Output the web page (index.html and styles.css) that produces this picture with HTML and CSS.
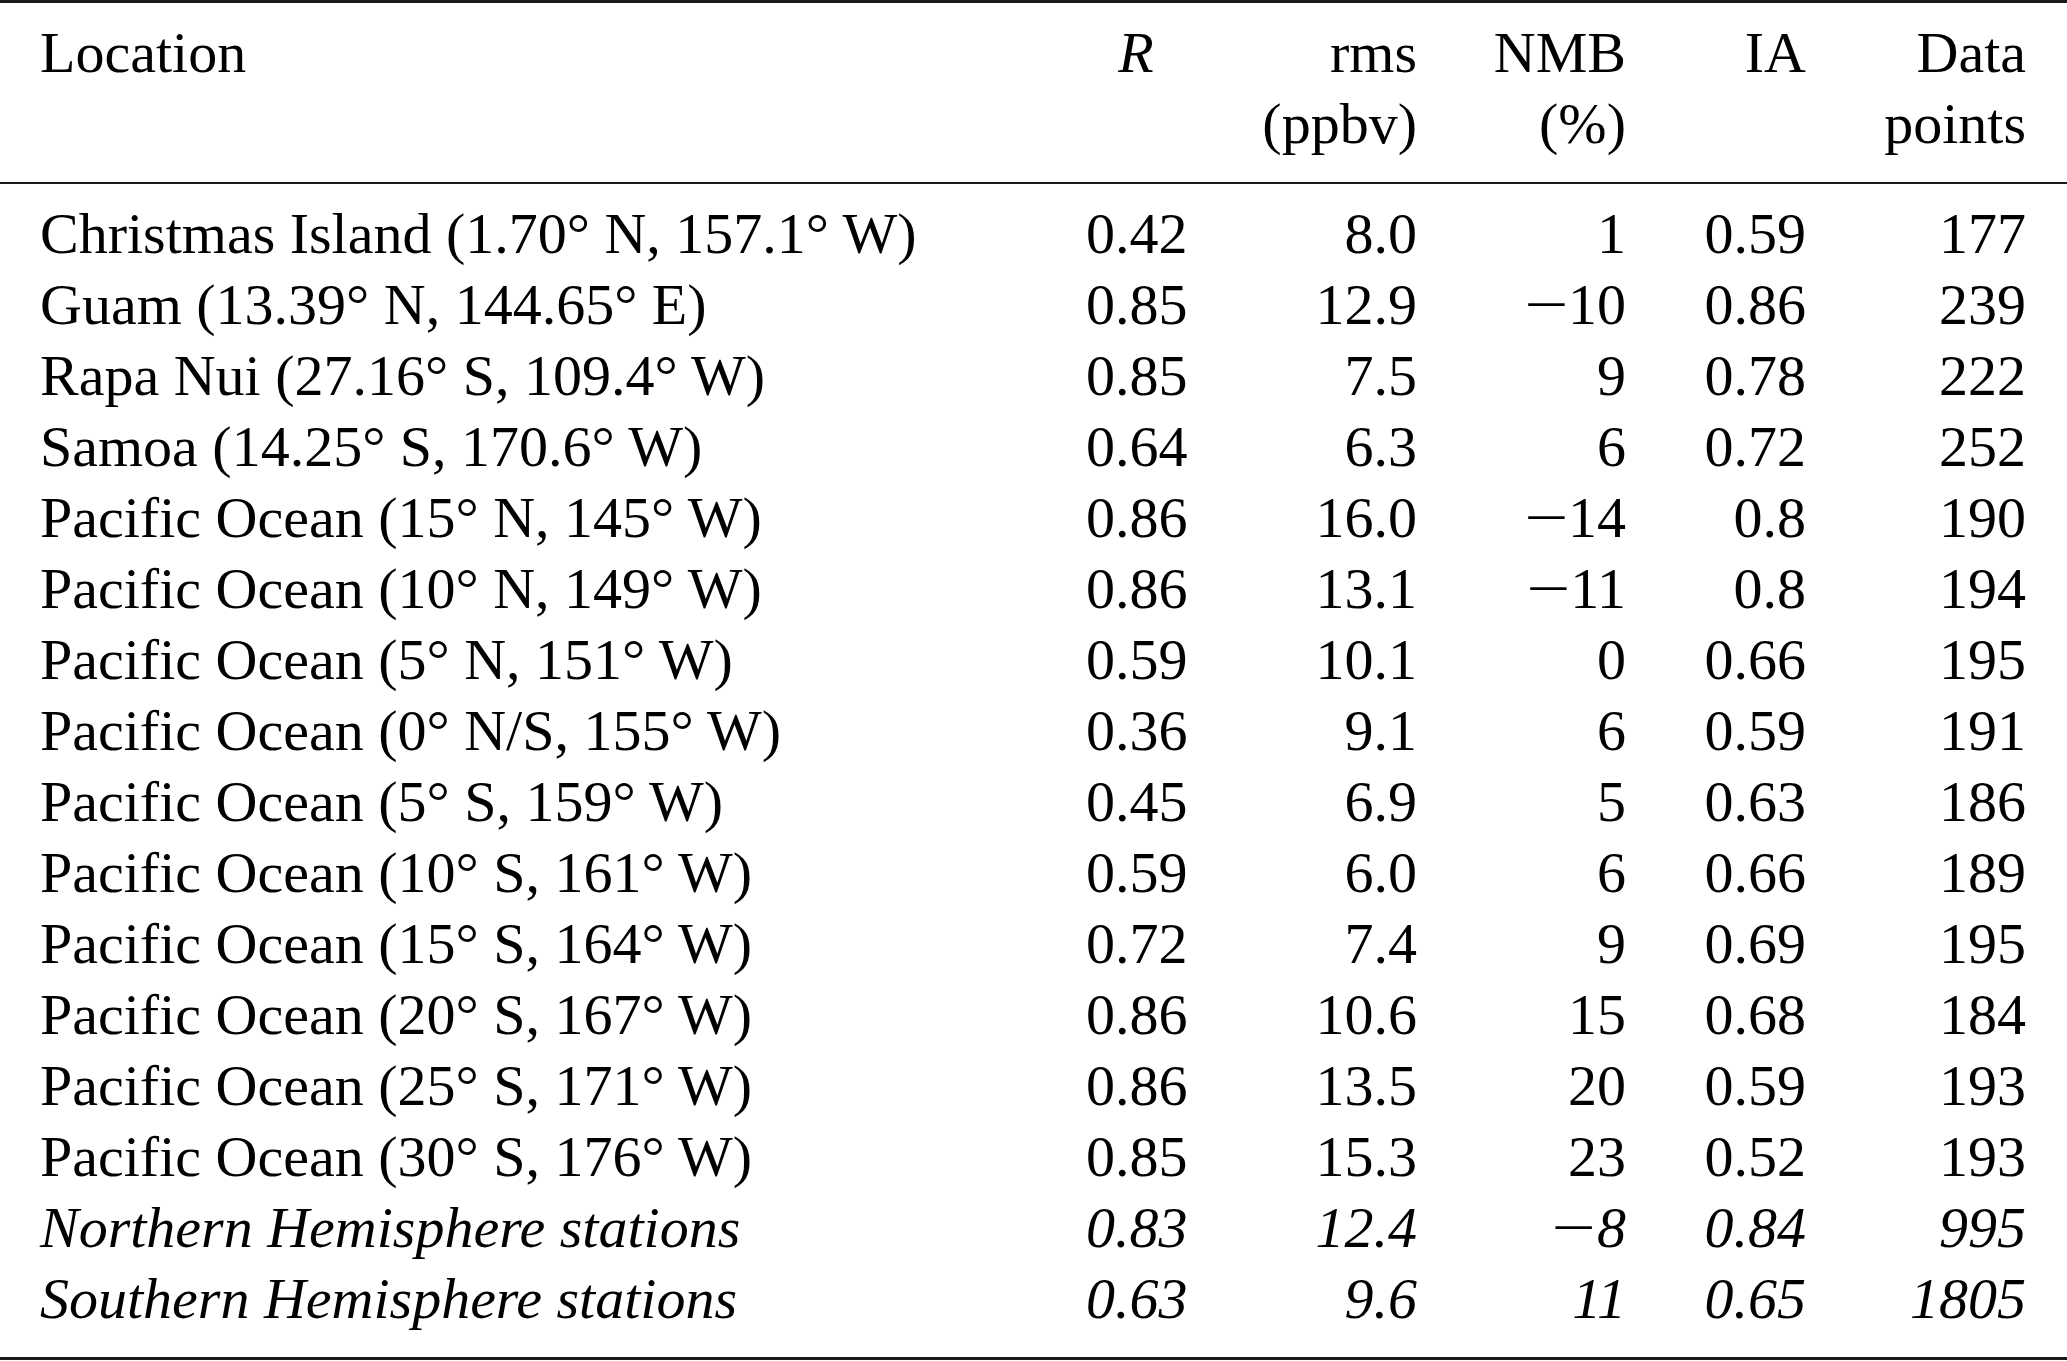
FILE: index.html
```html
<!DOCTYPE html>
<html lang="en">
<head>
<meta charset="utf-8">
<title>Ozone evaluation statistics</title>
<link rel="stylesheet" href="styles.css">
</head>
<body>
<table class="stats">
  <colgroup>
    <col class="c-loc">
    <col class="c-r">
    <col class="c-rms">
    <col class="c-nmb">
    <col class="c-ia">
    <col class="c-n">
  </colgroup>
  <thead>
    <tr>
      <th class="loc">Location</th>
      <th class="ctr"><i>R</i></th>
      <th>rms<br>(ppbv)</th>
      <th>NMB<br>(%)</th>
      <th>IA</th>
      <th class="last-col">Data<br>points</th>
    </tr>
  </thead>
  <tbody>
    <tr class="first"><td class="loc">Christmas Island (1.70° N, 157.1° W)</td><td class="ctr">0.42</td><td>8.0</td><td>1</td><td>0.59</td><td class="last-col">177</td></tr>
    <tr><td class="loc">Guam (13.39° N, 144.65° E)</td><td class="ctr">0.85</td><td>12.9</td><td><span class="minus">−</span>10</td><td>0.86</td><td class="last-col">239</td></tr>
    <tr><td class="loc">Rapa Nui (27.16° S, 109.4° W)</td><td class="ctr">0.85</td><td>7.5</td><td>9</td><td>0.78</td><td class="last-col">222</td></tr>
    <tr><td class="loc">Samoa (14.25° S, 170.6° W)</td><td class="ctr">0.64</td><td>6.3</td><td>6</td><td>0.72</td><td class="last-col">252</td></tr>
    <tr><td class="loc">Pacific Ocean (15° N, 145° W)</td><td class="ctr">0.86</td><td>16.0</td><td><span class="minus">−</span>14</td><td>0.8</td><td class="last-col">190</td></tr>
    <tr><td class="loc">Pacific Ocean (10° N, 149° W)</td><td class="ctr">0.86</td><td>13.1</td><td><span class="minus">−</span>11</td><td>0.8</td><td class="last-col">194</td></tr>
    <tr><td class="loc">Pacific Ocean (5° N, 151° W)</td><td class="ctr">0.59</td><td>10.1</td><td>0</td><td>0.66</td><td class="last-col">195</td></tr>
    <tr><td class="loc">Pacific Ocean (0° N/S, 155° W)</td><td class="ctr">0.36</td><td>9.1</td><td>6</td><td>0.59</td><td class="last-col">191</td></tr>
    <tr><td class="loc">Pacific Ocean (5° S, 159° W)</td><td class="ctr">0.45</td><td>6.9</td><td>5</td><td>0.63</td><td class="last-col">186</td></tr>
    <tr><td class="loc">Pacific Ocean (10° S, 161° W)</td><td class="ctr">0.59</td><td>6.0</td><td>6</td><td>0.66</td><td class="last-col">189</td></tr>
    <tr><td class="loc">Pacific Ocean (15° S, 164° W)</td><td class="ctr">0.72</td><td>7.4</td><td>9</td><td>0.69</td><td class="last-col">195</td></tr>
    <tr><td class="loc">Pacific Ocean (20° S, 167° W)</td><td class="ctr">0.86</td><td>10.6</td><td>15</td><td>0.68</td><td class="last-col">184</td></tr>
    <tr><td class="loc">Pacific Ocean (25° S, 171° W)</td><td class="ctr">0.86</td><td>13.5</td><td>20</td><td>0.59</td><td class="last-col">193</td></tr>
    <tr><td class="loc">Pacific Ocean (30° S, 176° W)</td><td class="ctr">0.85</td><td>15.3</td><td>23</td><td>0.52</td><td class="last-col">193</td></tr>
    <tr class="ital"><td class="loc">Northern Hemisphere stations</td><td class="ctr">0.83</td><td>12.4</td><td><span class="minus">−</span>8</td><td>0.84</td><td class="last-col">995</td></tr>
    <tr class="ital last"><td class="loc">Southern Hemisphere stations</td><td class="ctr">0.63</td><td>9.6</td><td>11</td><td>0.65</td><td class="last-col">1805</td></tr>
  </tbody>
</table>
</body>
</html>
```

FILE: styles.css
```css
html, body {
  margin: 0;
  padding: 0;
  background: #ffffff;
}

.stats {
  width: 2067px;
  table-layout: fixed;
  border-collapse: separate;
  border-spacing: 0;
  font-family: "Liberation Serif", "Times New Roman", serif;
  font-size: 58px;
  line-height: 71px;
  color: #000000;
}

.c-loc { width: 1086px; }
.c-r { width: 100px; }
.c-rms { width: 231px; }
.c-nmb { width: 209px; }
.c-ia { width: 180px; }
.c-n { width: 261px; }

.stats th,
.stats td {
  padding: 0;
  text-align: right;
  vertical-align: top;
  font-weight: normal;
  white-space: nowrap;
}

.stats th {
  border-top: 3px solid #1a1a1a;
  border-bottom: 2px solid #1a1a1a;
  padding-top: 14px;
  padding-bottom: 23px;
}

.stats .loc {
  text-align: left;
  padding-left: 40px;
}

.stats .ctr {
  text-align: center;
}

.stats .last-col {
  padding-right: 41px;
}

.stats tr.first td {
  padding-top: 14px;
}

.stats tr.last td {
  padding-bottom: 23px;
  border-bottom: 3px solid #1a1a1a;
}

.stats tr.ital td {
  font-style: italic;
}

.minus {
  display: inline-block;
  transform: scaleX(1.35);
  margin-right: 5px;
}
```
